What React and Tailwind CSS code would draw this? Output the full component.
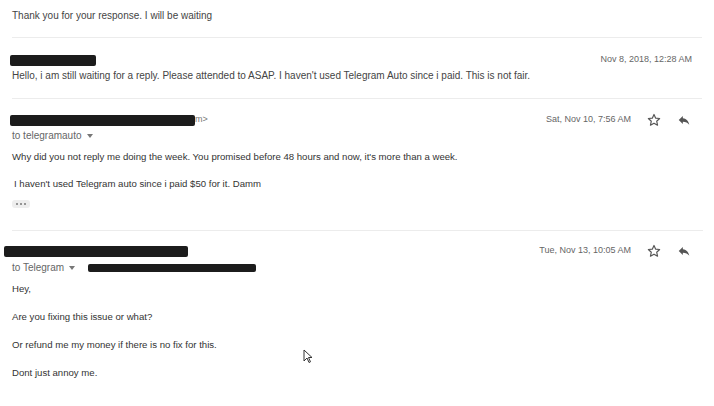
import React from 'react';

const font = { fontFamily: '"Liberation Sans", Arial, sans-serif' };

function Star() {
  return (
    <svg width="14" height="14" viewBox="0 0 24 24" fill="none" stroke="#555" strokeWidth="2" strokeLinejoin="round">
      <path d="M12 2.5l2.9 6.3 6.8.7-5.1 4.6 1.5 6.8L12 17.4l-6.1 3.5 1.5-6.8-5.1-4.6 6.8-.7z" />
    </svg>
  );
}

function Reply() {
  return (
    <svg width="14" height="14" viewBox="0 0 24 24" fill="#555">
      <path d="M10 9V5l-7 7 7 7v-4.1c5 0 8.5 1.6 11 5.1-1-5-4-10-11-11z" />
    </svg>
  );
}

function Redact({ w, h = 'h-[11px]' }) {
  return <div className={`${h} ${w} rounded-[2px] bg-[#1c1c1c]`} />;
}

function Actions({ date }) {
  return (
    <div className="flex items-center">
      <span className="text-[9px] text-[#666]">{date}</span>
      <span className="ml-[16px]"><Star /></span>
      <span className="ml-[16px] mr-[12px]"><Reply /></span>
    </div>
  );
}

function Caret() {
  return <span className="ml-[5px] inline-block border-x-[3px] border-t-[4px] border-x-transparent border-t-[#777] align-middle" />;
}

export default function App() {
  return (
    <div className="w-[714px] h-[406px] bg-white overflow-hidden relative text-[#333]" style={font}>
      {/* first message collapsed */}
      <div className="h-[38px] mx-[12px] border-b border-[#ececec] pt-[8px] text-[10px] text-[#444]">
        Thank you for your response. I will be waiting
      </div>

      {/* second collapsed */}
      <div className="h-[61px] mx-[12px] border-b border-[#ececec] pt-[16px]">
        <div className="flex items-center justify-between h-[12px]">
          <div className="-ml-[2px]"><Redact w="w-[86px]" /></div>
          <span className="text-[9px] text-[#666] mr-[10px]">Nov 8, 2018, 12:28 AM</span>
        </div>
        <div className="mt-[2px] text-[10px] text-[#444]">
          Hello, i am still waiting for a reply. Please attended to ASAP. I haven't used Telegram Auto since i paid. This is not fair.
        </div>
      </div>

      {/* third expanded */}
      <div className="h-[132px] ml-[12px] mr-[11px] border-b border-[#ececec] pt-[14px]">
        <div className="flex items-center justify-between h-[14px]">
          <div className="flex items-center -ml-[2px]">
            <Redact w="w-[185px]" />
            <span className="text-[9px] text-[#777]">m&gt;</span>
          </div>
          <Actions date="Sat, Nov 10, 7:56 AM" />
        </div>
        <div className="mt-[1px] flex items-center text-[10px] text-[#666]">
          to telegramauto<Caret />
        </div>
        <div className="mt-[7px] text-[9.6px] leading-[14px] text-[#333]">
          Why did you not reply me doing the week. You promised before 48 hours and now, it's more than a week.
        </div>
        <div className="mt-[13px] ml-[2px] text-[9.6px] leading-[14px] text-[#333]">
          I haven't used Telegram auto since i paid $50 for it. Damm
        </div>
        <div className="mt-[9px] w-[18px] h-[8px] rounded-[3px] bg-[#eeeeee] flex items-center justify-center gap-[2px]">
          <span className="w-[2px] h-[2px] rounded-full bg-[#777]" />
          <span className="w-[2px] h-[2px] rounded-full bg-[#777]" />
          <span className="w-[2px] h-[2px] rounded-full bg-[#777]" />
        </div>
      </div>

      {/* fourth expanded */}
      <div className="ml-[12px] mr-[11px] pt-[13px]">
        <div className="flex items-center justify-between h-[14px]">
          <div className="-ml-[8px]"><Redact w="w-[184px]" /></div>
          <Actions date="Tue, Nov 13, 10:05 AM" />
        </div>
        <div className="mt-[2px] flex items-center text-[10px] text-[#666]">
          to Telegram<Caret />
          <div className="ml-[13px]"><Redact w="w-[168px]" h="h-[8px]" /></div>
        </div>
        <div className="mt-[7px] text-[9.6px] leading-[14px] text-[#333]">Hey,</div>
        <div className="mt-[14px] text-[9.6px] leading-[14px] text-[#333]">Are you fixing this issue or what?</div>
        <div className="mt-[14px] text-[9.6px] leading-[14px] text-[#333]">Or refund me my money if there is no fix for this.</div>
        <div className="mt-[14px] text-[9.6px] leading-[14px] text-[#333]">Dont just annoy me.</div>
      </div>

      {/* mouse cursor */}
      <svg className="absolute left-[303px] top-[349px]" width="10" height="15" viewBox="0 0 10 15">
        <path d="M1 1v11l3-3 2 4.5 1.5-.7-2-4.3H9z" fill="#fff" stroke="#333" strokeWidth="1" strokeLinejoin="round" />
      </svg>
    </div>
  );
}
